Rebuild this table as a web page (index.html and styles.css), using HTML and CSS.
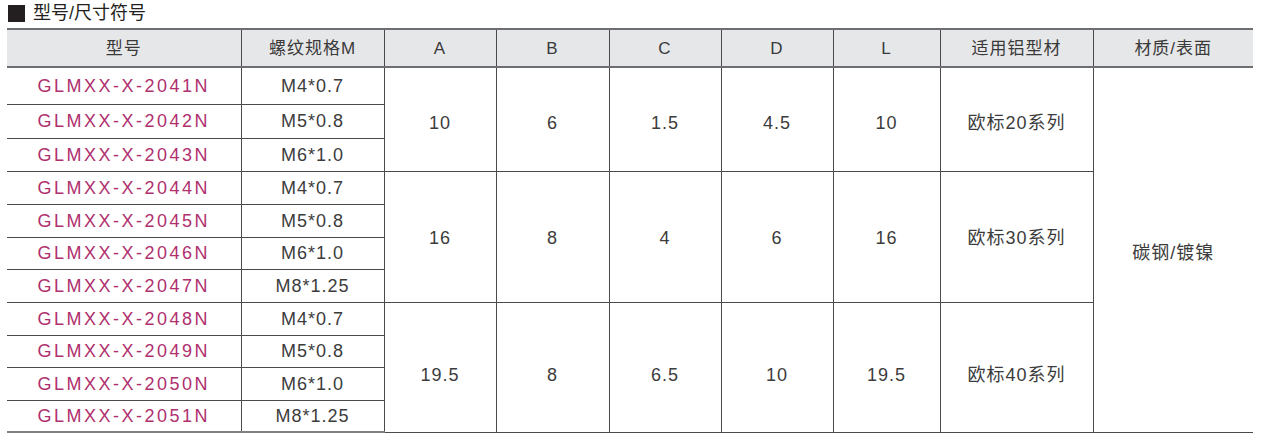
FILE: index.html
```html
<!DOCTYPE html>
<html lang="zh">
<head>
<meta charset="utf-8">
<title>型号/尺寸符号</title>
<link rel="stylesheet" href="styles.css">
</head>
<body>
<div class="title"><span class="square"></span><span class="title-text">型号/尺寸符号</span></div>
<table class="spec">
  <colgroup>
    <col class="c-model"><col class="c-thread"><col class="c-a"><col class="c-b"><col class="c-c"><col class="c-d"><col class="c-l"><col class="c-profile"><col class="c-mat">
  </colgroup>
  <thead>
    <tr><th>型号</th><th>螺纹规格M</th><th>A</th><th>B</th><th>C</th><th>D</th><th>L</th><th>适用铝型材</th><th class="last">材质/表面</th></tr>
  </thead>
  <tbody>
    <tr class="r1"><td class="code">GLMXX-X-2041N</td><td>M4*0.7</td><td rowspan="3" class="g1">10</td><td rowspan="3" class="g1">6</td><td rowspan="3" class="g1">1.5</td><td rowspan="3" class="g1">4.5</td><td rowspan="3" class="g1">10</td><td rowspan="3" class="g1">欧标20系列</td><td rowspan="11" class="last mat">碳钢/镀镍</td></tr>
    <tr class="r2"><td class="code">GLMXX-X-2042N</td><td>M5*0.8</td></tr>
    <tr class="r3"><td class="code">GLMXX-X-2043N</td><td>M6*1.0</td></tr>
    <tr class="r4"><td class="code">GLMXX-X-2044N</td><td>M4*0.7</td><td rowspan="4" class="g2">16</td><td rowspan="4" class="g2">8</td><td rowspan="4" class="g2">4</td><td rowspan="4" class="g2">6</td><td rowspan="4" class="g2">16</td><td rowspan="4" class="g2">欧标30系列</td></tr>
    <tr class="r5"><td class="code">GLMXX-X-2045N</td><td>M5*0.8</td></tr>
    <tr class="r6"><td class="code">GLMXX-X-2046N</td><td>M6*1.0</td></tr>
    <tr class="r7"><td class="code">GLMXX-X-2047N</td><td>M8*1.25</td></tr>
    <tr class="r8"><td class="code">GLMXX-X-2048N</td><td>M4*0.7</td><td rowspan="4" class="g3">19.5</td><td rowspan="4" class="g3">8</td><td rowspan="4" class="g3">6.5</td><td rowspan="4" class="g3">10</td><td rowspan="4" class="g3">19.5</td><td rowspan="4" class="g3">欧标40系列</td></tr>
    <tr class="r9"><td class="code">GLMXX-X-2049N</td><td>M5*0.8</td></tr>
    <tr class="r10"><td class="code">GLMXX-X-2050N</td><td>M6*1.0</td></tr>
    <tr class="r11"><td class="code">GLMXX-X-2051N</td><td>M8*1.25</td></tr>
  </tbody>
</table>
</body>
</html>
```
FILE: styles.css
```css
html, body {
  margin: 0;
  padding: 0;
  background: #ffffff;
}
body {
  font-family: "Liberation Sans", "Noto Sans CJK SC", sans-serif;
  color: #3c3c3c;
}
.title {
  display: flex;
  align-items: center;
  gap: 8px;
  height: 28px;
  padding-left: 8px;
  box-sizing: border-box;
  padding-bottom: 2px;
}
.square {
  display: block;
  width: 17px;
  height: 17px;
  background: #231f20;
}
.title-text {
  font-size: 18px;
  color: #231f20;
  line-height: 1;
}
.spec {
  margin-left: 7px;
  border-collapse: collapse;
  table-layout: fixed;
  width: 1246px;
  font-size: 18px;
}
.c-model { width: 234px; }
.c-thread { width: 143px; }
.c-a { width: 112px; }
.c-b { width: 113px; }
.c-c { width: 112px; }
.c-d { width: 112px; }
.c-l { width: 107px; }
.c-profile { width: 153px; }
.c-mat { width: 160px; }

.spec th, .spec td {
  padding: 0;
  text-align: center;
  vertical-align: middle;
  border: 1px solid #4a4a4a;
  line-height: 1;
  font-weight: normal;
  letter-spacing: 1px;
}
.spec th:first-child, .spec td.code {
  border-left: none;
}
.spec .last {
  border-right: none;
}
.spec thead th {
  background: #e6e7e8;
  height: 36px;
  border-top: 2px solid #6d6e71;
  border-bottom: 2px solid #6d6e71;
  color: #3a3a3a;
  font-size: 17px;
}
.spec tbody tr { height: 33px; }
.spec tbody tr.r1 { height: 37px; }
.spec tbody tr.r2 { height: 34px; }
.spec tbody tr.r6, .spec tbody tr.r9, .spec tbody tr.r11 { height: 32px; }
.spec tbody tr.r11 td { border-bottom: 2px solid #808080; }
.spec td.g1 { padding-top: 8px; }
.spec td.g2 { padding-top: 2px; }
.spec td.g3 { padding-top: 16px; }
.spec td.mat { padding-top: 6px; }
.spec td.code {
  color: #b0306e;
  letter-spacing: 2.5px;
}
```
